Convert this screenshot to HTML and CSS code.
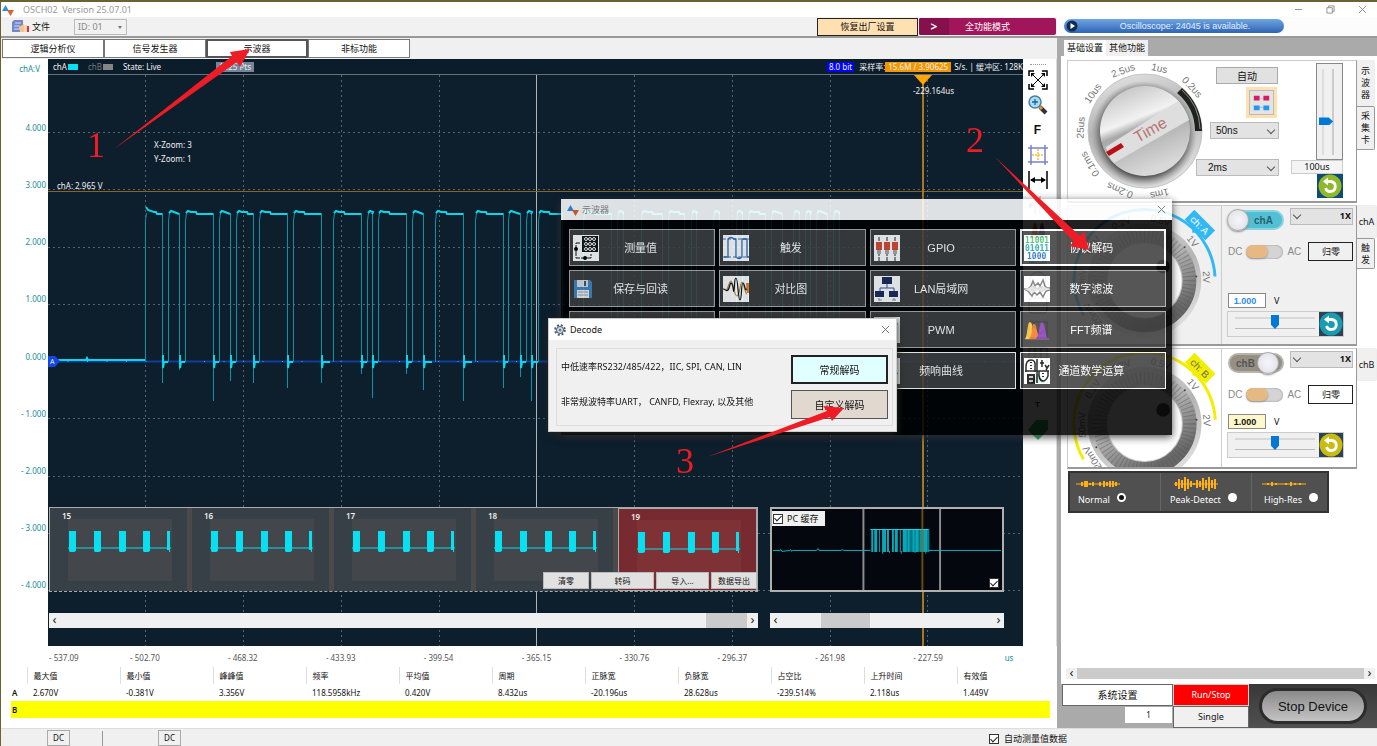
FILE: index.html
```html
<!DOCTYPE html>
<html lang="zh-CN">
<head>
  <meta charset="utf-8">
  <title>OSCH02 Version 25.07.01</title>
  <link rel="stylesheet" href="styles.css">
</head>
<body>
  <!-- shared shapes -->
  <svg class="defs" width="0" height="0">
    <defs>
      <linearGradient id="metal" x1="0" y1="0" x2="0.3" y2="1">
        <stop offset="0" stop-color="#e8e8e8"/><stop offset="0.5" stop-color="#b4b4b4"/><stop offset="1" stop-color="#dcdcdc"/>
      </linearGradient>
      <linearGradient id="face" x1="0" y1="0" x2="0.4" y2="1">
        <stop offset="0" stop-color="#b8b8b8"/><stop offset="0.45" stop-color="#f2f2f2"/><stop offset="0.55" stop-color="#a8a8a8"/><stop offset="1" stop-color="#d8d8d8"/>
      </linearGradient>
      <radialGradient id="shade">
        <stop offset="0.75" stop-color="#333"/><stop offset="0.84" stop-color="#777"/><stop offset="1" stop-color="#999" stop-opacity="0"/>
      </radialGradient>
      <linearGradient id="ring" x1="0" y1="0" x2="0.6" y2="1">
        <stop offset="0" stop-color="#dedede"/><stop offset="0.5" stop-color="#b5b5b5"/><stop offset="1" stop-color="#666"/>
      </linearGradient>
      <symbol id="logo" viewBox="0 0 12 12">
        <path d="M0 7 L3.500 1 L7 7Z" fill="#2f8fe0"/><path d="M5 6H12L8.500 12Z" fill="#e0602a"/>
      </symbol>
      <symbol id="reload" viewBox="0 0 24 24">
        <circle cx="12" cy="12" r="11.500"/>
        <path d="M8 7.500 H13 A5 5 0 1 1 7.500 14" fill="none" stroke="#fff" stroke-width="2.800"/>
        <path d="M10 3.500V11.500L5 7.500Z" fill="#fff"/>
      </symbol>
      <symbol id="burst" viewBox="0 0 142 84">
        <path d="M19 41H122" stroke="#08dff0"/>
        <path d="M20 24h7v20l-2 1h-4l-1-1zM45 24h7v20l-2 1h-4l-1-1zM70 24h7v20l-2 1h-4l-1-1zM94 24h7v20l-2 1h-4l-1-1zM118 24h3v21h-1v-2h-2z" fill="#08dff0"/>
      </symbol>
      <symbol id="knob" viewBox="0 0 154 141">
        <g class="knob-text">
          <text transform="rotate(87 77 76)" x="77" y="16">2V</text>
          <text transform="rotate(51 77 76)" x="77" y="16">1V</text>
          <text transform="rotate(15 77 76)" x="77" y="16">0.5V</text>
          <text transform="rotate(-22 77 76)" x="77" y="16">0.2V</text>
          <text transform="rotate(-56 77 76)" x="77" y="16">0.1V</text>
          <text transform="rotate(-91 77 76)" x="77" y="16">50mV</text>
          <text transform="rotate(-123 77 76)" x="77" y="16">20mV</text>
        </g>
        <circle cx="77" cy="76" r="58" fill="url(#metal)"/>
        <circle cx="77" cy="76" r="46" fill="none" stroke="url(#ring)" stroke-width="14"/>
        <circle cx="77" cy="76" r="46" fill="none" stroke="#555" stroke-width="13" stroke-dasharray="1 3" opacity=".4"/>
        <circle cx="77" cy="76" r="38" fill="#fff"/>
        <circle cx="96" cy="62" r="7" fill="#555"/>
        <g fill="#444"><circle cx="130" cy="72" r="1"/><circle cx="118" cy="42" r="1"/><circle cx="28" cy="100" r="1"/></g>
      </symbol>
    </defs>
  </svg>

  <header class="titlebar">
    <svg class="logo"><use href="#logo"/></svg>
    <span>OSCH02&nbsp; Version 25.07.01</span>
    <div class="window-btns">
      <button aria-label="minimize"><svg viewBox="0 0 10 10"><path d="M1 5H9"/></svg></button>
      <button aria-label="restore"><svg viewBox="0 0 10 10"><path d="M1 3H7V9H1ZM3 3V1H9V7H7"/></svg></button>
      <button aria-label="close"><svg viewBox="0 0 10 10"><path d="M1 1L9 9M9 1L1 9"/></svg></button>
    </div>
  </header>

  <div class="toolbar">
    <div class="toolbar-left">
      <button class="file-btn">
        <svg viewBox="0 0 18 13"><path d="M2 0H11V12H0V2Z" fill="#7388c8"/><path d="M3 3H9M2 6H8M2 9H8" stroke="#d5dcf5"/><path d="M7 7L12 4V12H8Z" fill="#f6c38c"/><path d="M12 5h3v7h-3z" fill="#f8d9a8"/><path d="M15 6h2v6h-2z" fill="#e8284c"/></svg>
        文件
      </button>
      <div class="select id-select"><select aria-label="ID"><option>ID: 01</option></select></div>
      <button class="restore-btn">恢复出厂设置</button>
      <button class="mode-btn"><b>&gt;</b><span>全功能模式</span></button>
    </div>
    <div class="device-pill">
      <svg viewBox="0 0 12 12"><circle cx="6" cy="6" r="5.500" fill="#122b55"/><path d="M4.500 3L9 6L4.500 9Z" fill="#fff"/></svg>
      <span>Oscilloscope: 24045 is available.</span>
    </div>
  </div>

  <main>
    <section class="left">
      <nav class="tabs">
        <button>逻辑分析仪</button>
        <button>信号发生器</button>
        <button class="active">示波器</button>
        <button>非标功能</button>
      </nav>

      <div class="scope">
        <div class="y-axis">
          <span class="unit">chA:V</span>
          <div class="ticks">
            <span>4.000</span><span>3.000</span><span>2.000</span><span>1.000</span><span>0.000</span><span>- 1.000</span><span>- 2.000</span><span>- 3.000</span><span>- 4.000</span>
          </div>
        </div>

        <div class="plot">
          <svg class="graph" viewBox="0 0 975 587" preserveAspectRatio="none">
            <path class="grid-v" d="M97.500 16V587M195.500 16V587M293.500 16V587M391.500 16V587M586.500 16V587M684.500 16V587M782.500 16V587M879.500 16V587"/>
            <path class="grid-v" d="M0 73.500H975M0 130.500H975M0 188.500H975M0 245.500H975M0 359.500H975M0 417.500H975M0 474.500H975M0 531.500H975"/>
            <path d="M488.500 16V587" stroke="#aeb4ba"/>
            <path d="M0 302.500H975" stroke="#0c3f9c" stroke-width="2"/>
            <path d="M0 302.500H975" stroke="#7f95c8" stroke-dasharray="1 18.500"/>
            <path id="edges"/>
            <path id="tops"/>
            <path d="M0 132.500H975" stroke="#8a6424"/>
            <path d="M875 16V587" stroke="#a8781a" stroke-width="2"/>
            <path d="M866 16H884L875 26Z" fill="#ffa500"/>
            <path d="M0 297H7L12 302L7 308H0Z" fill="#1247e0"/>
          </svg>

          <div class="plot-head">
            <span>chA</span><i class="swatch a"></i>
            <span class="dim">chB</span><i class="swatch b"></i>
            <span class="state">State: Live</span>
            <span class="pts">1325 Pts</span>
            <span class="bits">8.0 bit</span>
            <span>采样率:</span>
            <span class="rate">15.6M / 3.90625</span>
            <span class="buffer">S/s. | 缓冲区: 128K</span>
          </div>
          <div class="zoom-info"><p>X-Zoom: 3</p><p>Y-Zoom: 1</p></div>
          <span class="level">chA: 2.965 V</span>
          <span class="cursor-time">-229.164us</span>
          <span class="zero-mark">A</span>

          <div class="history">
            <div class="frames">
              <div class="frame"><b>15</b><svg><use href="#burst"/></svg></div>
              <div class="frame"><b>16</b><svg><use href="#burst"/></svg></div>
              <div class="frame"><b>17</b><svg><use href="#burst"/></svg></div>
              <div class="frame"><b>18</b><svg><use href="#burst"/></svg></div>
              <div class="frame current"><b>19</b><svg><use href="#burst"/></svg></div>
              <div class="frame-btns">
                <button>清零</button><button>转码</button><button>导入...</button><button>数据导出</button>
              </div>
            </div>
            <div class="cache">
              <svg viewBox="0 0 234 85" preserveAspectRatio="none">
                <path d="M93 0V85M171 0V85" stroke="#8c8c8c" stroke-width="2"/>
                <path d="M1 43.500H8l1-1 1 2 8-1 1-1 1 2 1-1H45l2-2 1 2H70l2-1 1 1H100M159 43.500H233" stroke="#08b8c8" fill="none"/>
                <path d="M101 33H160" stroke="#08a8b8" stroke-width="24" stroke-dasharray="2 1 3 2 1 2 4 1 2 3"/>
                <path d="M136 33H159" stroke="#08a8b8" stroke-width="24" opacity=".7"/>
                <path d="M100 21.500H159" stroke="#08dff0"/>
                <path d="M112.500 44V47M119.500 44V46M131.500 44V47M145.500 44V46M156.500 44V47" stroke="#08a8b8"/>
                <path d="M153 0V85" stroke="#a8781a" stroke-width="2" opacity=".6"/>
              </svg>
              <label class="cache-label"><input type="checkbox" checked> PC 缓存</label>
              <input class="cache-check" type="checkbox" checked aria-label="显示缓存">
            </div>
            <div class="scrollbar"><i>‹</i><span class="track"><span style="margin-left:94%;width:6%"></span></span><i>›</i></div>
            <div class="scrollbar"><i>‹</i><span class="track"><span style="margin-left:19%;width:23%"></span></span><i>›</i></div>
          </div>
        </div>

        <div class="tools">
          <hr>
          <button aria-label="fit"><svg viewBox="0 0 20 20"><path d="M1 6V1H6M14 1H19V6M19 14V19H14M6 19H1V14" fill="none" stroke="#000" stroke-width="1.500"/><path d="M3 3L17 17M17 3L3 17" stroke="#000"/><path d="M3 3h4L3 7zM17 3v4l-4-4zM3 17v-4l4 4zM17 17h-4l4-4z"/></svg></button>
          <button aria-label="zoom"><svg viewBox="0 0 20 20"><path d="M12 12L18 18" stroke="#333" stroke-width="4"/><path d="M11 11L14 14" stroke="#e8902a" stroke-width="3"/><circle cx="7" cy="7" r="6" fill="#a8dcf8" stroke="#4c7f9c" stroke-width="1.500"/><path d="M4 7H10M7 4V10" stroke="#24608a" stroke-width="1.300"/></svg></button>
          <button class="letter">F</button>
          <button aria-label="grid"><svg viewBox="0 0 20 20"><path d="M0 3H20M0 17H20M3 0V20M17 0V20" stroke="#7883c8" stroke-width="1.500"/><path d="M4 10H16M10 4V16" stroke="#f0c040" stroke-width="1.500" stroke-dasharray="2 1"/></svg></button>
          <button aria-label="width"><svg viewBox="0 0 20 20"><path d="M1 1V19M19 1V19M3 10H17" stroke="#000" stroke-width="1.500"/><path d="M2 10l5-3v6zM18 10l-5-3v6z"/></svg></button>
          <button aria-label="pause"><svg viewBox="0 0 20 20"><path d="M7 1V19M12 1V19" stroke="#999"/><path d="M1 7L6 10L1 13Z" fill="#999"/></svg></button>
          <button aria-label="histogram"><svg viewBox="0 0 20 20"><path d="M1 18C5 18 4 3 7 3S9 18 12 18Z" fill="#c85a28"/><path d="M9 18C12 18 11 3 14 3S16 18 19 18Z" fill="#7a3fa0"/></svg></button>
          <button aria-label="save"><svg viewBox="0 0 20 20"><path d="M2 2H18V18H2ZM5 2V8H15V2M5 18V11H15V18" fill="none" stroke="#2c6f94"/></svg></button>
          <button aria-label="record"><svg viewBox="0 0 20 20"><circle cx="10" cy="10" r="8" fill="none" stroke="#888"/></svg></button>
          <button aria-label="frame"><svg viewBox="0 0 20 20"><rect x="1" y="3" width="18" height="15" rx="3" fill="none" stroke="#777"/><path d="M2 10H18" stroke="#c8a020"/></svg></button>
          <button aria-label="wave"><svg viewBox="0 0 20 20"><path d="M1 2H19V18H1ZM3 10Q6 3 9 10T16 10" fill="none" stroke="#777"/></svg></button>
          <button aria-label="table"><svg viewBox="0 0 20 20"><path d="M1 3H19V18H1ZM1 8H19M1 13H19M7 3V18M13 3V18" fill="none" stroke="#777"/></svg></button>
          <button aria-label="clean"><svg viewBox="0 0 20 20"><path d="M10 2L17 13H3Z" fill="#1e9c7c"/></svg></button>
          <button class="letter small">T</button>
          <button aria-label="tag"><svg viewBox="0 0 20 20"><path d="M8 0H20V10L10 20L0 10Z" fill="#2fb56c"/></svg></button>
        </div>
      </div>

      <div class="x-axis">
        <span>- 537.09</span><span>- 502.70</span><span>- 468.32</span><span>- 433.93</span><span>- 399.54</span><span>- 365.15</span><span>- 330.76</span><span>- 296.37</span><span>- 261.98</span><span>- 227.59</span><span class="unit">us</span>
      </div>

      <table class="measure">
        <thead>
          <tr><th></th><th>最大值</th><th>最小值</th><th>峰峰值</th><th>频率</th><th>平均值</th><th>周期</th><th>正脉宽</th><th>负脉宽</th><th>占空比</th><th>上升时间</th><th>有效值</th></tr>
        </thead>
        <tbody>
          <tr><th>A</th><td>2.670V</td><td>-0.381V</td><td>3.356V</td><td>118.5958kHz</td><td>0.420V</td><td>8.432us</td><td>-20.196us</td><td>28.628us</td><td>-239.514%</td><td>2.118us</td><td>1.449V</td></tr>
          <tr class="row-b"><th>B</th><td colspan="11"></td></tr>
        </tbody>
      </table>
    </section>

    <aside class="right">
      <nav class="side-head"><button class="active">基础设置</button><button>其他功能</button></nav>

      <div class="panels">
        <div class="group">
          <div class="panel time">
            <svg class="time-knob" viewBox="0 0 136 141">
              <g class="knob-text">
                <text transform="rotate(13 77 70)" x="77" y="9">1us</text>
                <text transform="rotate(47 77 70)" x="77" y="9">0.2us</text>
                <text transform="rotate(-20 77 70)" x="77" y="9">2.5us</text>
                <text transform="rotate(-54 77 70)" x="77" y="9">10us</text>
                <text transform="rotate(-87 77 70)" x="77" y="9">25us</text>
                <text transform="rotate(-121 77 70)" x="77" y="9">0.1ms</text>
                <text transform="rotate(-157 77 70)" x="77" y="9">0.2ms</text>
                <text transform="rotate(-193 77 70)" x="77" y="9">1ms</text>
              </g>
              <circle cx="77" cy="70" r="57" fill="url(#metal)" stroke="#c4c4c4"/>
              <circle cx="76" cy="73" r="53" fill="url(#shade)"/>
              <path d="M109 32A50 50 0 0 1 127 70H134A57 57 0 0 0 114 27Z" fill="#20221f"/>
              <path d="M114 29A54 54 0 0 1 132 68" fill="none" stroke="#8f8f8a"/>
              <circle cx="77" cy="70" r="45" fill="url(#face)"/>
              <path d="M38 86L110 40Q118 48 121 59L46 102Q40 96 38 86Z" fill="#dedede"/>
              <path d="M38 91L53 82L56 86L41 95Z" fill="#bb0f14"/>
              <text class="time-text" transform="rotate(-29 83 70)" x="83" y="74">Time</text>
            </svg>
            <div class="time-controls">
              <button class="auto-btn">自动</button>
              <button class="link-btn" aria-label="link"><svg viewBox="0 0 24 24"><path d="M7 8H17" stroke="#d8bcc8"/><path d="M7 17H17" stroke="#9cc"/><path d="M4 5h6v5h-6zM14 5h6v5h-6z" fill="#d81b60"/><path d="M4 15h6v5h-6zM14 15h6v5h-6z" fill="#2196f3"/></svg></button>
              <div class="select step"><select aria-label="最小时基"><option>50ns</option></select></div>
              <div class="select base"><select aria-label="时基"><option>2ms</option></select></div>
            </div>
            <div class="time-slider">
              <div class="v-slider"><input type="range" aria-label="时间" value="38"></div>
              <input type="text" class="time-value" aria-label="时间值" value="100us">
              <button class="reload green" aria-label="重置"><svg><use href="#reload"/></svg></button>
            </div>
          </div>
          <div class="side-tabs"><button class="active">示波器</button><button>采集卡</button></div>
        </div>

        <div class="group">
          <div class="panel channel a">
            <svg class="ch-knob" viewBox="0 0 154 141">
              <use href="#knob"/>
              <path class="arc" d="M15 112A72 72 0 1 1 149 72"/>
              <g transform="rotate(45 77 76)"><path class="tag" d="M62 -11H92V3H81L77 7L73 3H62Z"/><text class="tag-text" x="77" y="0">ch: A</text></g>
            </svg>
            <div class="ch-controls">
              <div class="row">
                <button class="toggle on"><span></span>chA</button>
                <div class="select probe"><select aria-label="chA 倍率"><option>1X</option></select></div>
              </div>
              <div class="row coupling">
                <span>DC</span><label class="switch"><input type="checkbox" aria-label="chA 耦合"></label><span>AC</span>
                <button class="zero">归零</button>
              </div>
              <div class="row volts"><input type="text" aria-label="chA 电平" value="1.000"><span>V</span></div>
              <div class="h-slider"><input type="range" aria-label="chA 偏移"><button class="reload" aria-label="重置 chA"><svg><use href="#reload"/></svg></button></div>
            </div>
          </div>
          <div class="side-tabs"><button class="active ch">chA</button><button class="trig">触发</button></div>
        </div>

        <div class="group">
          <div class="panel channel b">
            <svg class="ch-knob" viewBox="0 0 154 120">
              <use href="#knob" width="154" height="141"/>
              <path class="arc" d="M15 112A72 72 0 1 1 149 72"/>
              <g transform="rotate(45 77 76)"><path class="tag" d="M62 -11H92V3H81L77 7L73 3H62Z"/><text class="tag-text" x="77" y="0">ch: B</text></g>
            </svg>
            <div class="ch-controls">
              <div class="row">
                <button class="toggle">chB<span></span></button>
                <div class="select probe"><select aria-label="chB 倍率"><option>1X</option></select></div>
              </div>
              <div class="row coupling">
                <span>DC</span><label class="switch"><input type="checkbox" aria-label="chB 耦合"></label><span>AC</span>
                <button class="zero">归零</button>
              </div>
              <div class="row volts"><input type="text" aria-label="chB 电平" value="1.000"><span>V</span></div>
              <div class="h-slider"><input type="range" aria-label="chB 偏移"><button class="reload" aria-label="重置 chB"><svg><use href="#reload"/></svg></button></div>
            </div>
          </div>
          <div class="side-tabs"><button class="active ch">chB</button></div>
        </div>

        <div class="acquire">
          <label><svg viewBox="0 0 44 14"><path d="M0 7H44" stroke="#ffb014"/><path d="M6 5v4M9 4v6M11 4v6M14 6v2M17 5v4M24 5v4M28 4v6M31 5v4M34 4v6M37 4v6M40 5v4" stroke="#ffb014" stroke-width="2"/></svg><span>Normal <input type="radio" name="acq" checked></span></label>
          <label><svg viewBox="0 0 44 14"><path d="M0 7H44" stroke="#ffb014"/><path d="M2 5v4M5 2v10M8 3v8M11 0v14M14 2v10M17 4v6M20 6v2M23 3v8M26 4v6M29 1v12M32 3v8M35 0v14M38 3v8M41 2v10" stroke="#ffb014" stroke-width="2"/></svg><span>Peak-Detect <input type="radio" name="acq"></span></label>
          <label><svg viewBox="0 0 44 14"><path d="M0 7H44" stroke="#ffb014"/><path d="M6 6v2M10 5v4M14 6v2M24 6v2M29 5v4M33 6v2M38 6v2" stroke="#ffb014" stroke-width="2"/></svg><span>High-Res <input type="radio" name="acq"></span></label>
        </div>
      </div>

      <div class="scrollbar wide"><i>‹</i><span class="track"><span style="width:100%"></span></span><i>›</i></div>
      <div class="run">
        <button class="sys">系统设置</button>
        <button class="run-stop">Run/Stop</button>
        <div class="stop"><button>Stop Device</button></div>
        <input type="text" class="count" aria-label="次数" value="1">
        <button class="single">Single</button>
      </div>
    </aside>
  </main>

  <footer class="statusbar">
    <span class="dc">DC</span><i></i><span class="dc">DC</span>
    <label><input type="checkbox" checked> 自动测量值数据</label>
  </footer>

  <!-- function window -->
  <div class="func-window">
    <div class="func-title"><svg class="logo"><use href="#logo"/></svg><span>示波器</span><button aria-label="close"><svg viewBox="0 0 10 10"><path d="M1 1L9 9M9 1L1 9"/></svg></button></div>
    <div class="func-grid">
      <button><svg viewBox="0 0 26 26"><path d="M0 0H26V26H0Z" fill="#fff"/><path d="M9 1H25V17H9Z" fill="#111"/><g fill="none" stroke="#fff"><circle cx="13" cy="4" r="1.500"/><circle cx="17" cy="4" r="1.500"/><circle cx="21" cy="4" r="1.500"/><circle cx="13" cy="9" r="1.500"/><circle cx="17" cy="9" r="1.500"/><circle cx="21" cy="9" r="1.500"/><circle cx="13" cy="14" r="1.500"/><circle cx="17" cy="14" r="1.500"/><circle cx="21" cy="14" r="1.500"/></g><path d="M7 8H3V23H18V19" fill="none" stroke="#111" stroke-dasharray="5 1"/><circle cx="3" cy="14" r="2"/><circle cx="12" cy="23" r="2"/></svg><span>测量值</span></button>
      <button><svg viewBox="0 0 26 26"><path d="M0 0H26V26H0Z" fill="#fff"/><path d="M0 4H26M0 22H26" stroke="#3c70b8" stroke-dasharray="3 2"/><path d="M1 22H5V4Q8 1 11 4H13V22Q16 25 19 22V4H24V22H26" fill="none" stroke="#2e68b4" stroke-width="1.300"/></svg><span>触发</span></button>
      <button><svg viewBox="0 0 26 26"><path d="M0 0H26V26H0Z" fill="#fff"/><path d="M5 2V26M13 2V26M21 2V26" stroke="#222" stroke-dasharray="4 1"/><path d="M2 7h6v8h-6zM10 7h6v8h-6zM18 7h6v8h-6z" fill="#d84a34"/><path d="M3 15h4v4h-4zM11 15h4v4h-4zM19 15h4v4h-4z" fill="#aaa"/></svg><span>GPIO</span></button>
      <button class="hot"><svg viewBox="0 0 26 26"><path d="M0 0H26V26H0Z" fill="#fff"/><g font-family="DejaVu Sans Mono" font-weight="bold" font-size="8"><text x="1" y="8" fill="#3cc46c">11001</text><text x="1" y="16" fill="#25a8a8">01011</text><text x="3" y="24" fill="#2b78d8">1000</text></g></svg><span>协议解码</span></button>
      <button><svg class="low" viewBox="0 0 26 26"><path d="M1 4H17L19 6V22H1Z" fill="#3f86c4"/><path d="M4 4H15V11H4Z" fill="#d8dde0"/><path d="M11 5h2v5h-2z" fill="#456"/><path d="M4 14H16V22H4Z" fill="#eee"/><path d="M5 16H15M5 19H15" stroke="#999"/></svg><span>保存与回读</span></button>
      <button><svg viewBox="0 0 26 26"><path d="M0 0H26V26H0Z" fill="#fff"/><g fill="none" stroke-width="1.200"><path d="M3 14C5 14 6 5 8 5S11 20 14 20S17 6 19 6S22 18 24 18" stroke="#b89038"/><path d="M0 13C3 13 3 16 5 14S7 4 9 8S10 18 11 14S11 2 13 2S15 24 17 24S18 7 20 7S22 20 25 10" stroke="#111"/></g><path d="M23 7h3v10h-2z" fill="#e87a20"/></svg><span>对比图</span></button>
      <button><svg viewBox="0 0 26 26"><path d="M0 0H26V26H0Z" fill="#fff"/><path d="M13 7V12M6 17V12H20V17" fill="none" stroke="#3355b0"/><path d="M8 1H18V8H8ZM1 15H10V21H1ZM15 15H24V21H15Z" fill="#1d2b58"/><path d="M4 24h4M18 24h4M5 22v2M20 22v2" stroke="#88a"/></svg><span>LAN局域网</span></button>
      <button><svg viewBox="0 0 26 26"><path d="M0 0H26V26H0Z" fill="#fff"/><path d="M0 13H4L7 10L9 5L11 10L14 7L16 10L19 4L21 10L23 12H26M0 13L4 15L8 20L10 16L13 19L16 16L19 21L22 15L26 14" fill="none" stroke="#777" stroke-width="1.500"/><path d="M0 13L5 12L9 9L13 12L18 10L26 13L18 16L13 14L9 17Z" fill="#e0e0e0"/></svg><span>数字滤波</span></button>
      <button></button>
      <button></button>
      <button><svg viewBox="0 0 26 26"><path d="M0 0H26V26H0Z" fill="#fff"/><path d="M2 19V7H9V19H17V7H24" fill="none" stroke="#3970b8"/></svg><span>PWM</span></button>
      <button><svg viewBox="0 0 26 26"><path d="M1 22H25" stroke="#777"/><path d="M1 22C4 19 3 5 6 5S9 18 12 22Z" fill="#f8c838"/><path d="M5 22C9 18 7 7 10 7S13 18 16 22Z" fill="#f07828"/><path d="M12 22C16 17 15 5 18 5S21 18 24 22Z" fill="#8a3cb4"/></svg><span>FFT频谱</span></button>
      <button class="bright"></button>
      <button class="bright"></button>
      <button class="bright"><svg viewBox="0 0 26 26"><path d="M0 0H26V26H0Z" fill="#fff"/><path d="M2 20Q12 2 24 16" fill="none" stroke="#3970b8"/></svg><span>频响曲线</span></button>
      <button class="bright"><svg viewBox="0 0 26 26"><path d="M0 0H26V26H0Z" fill="#fff"/><path d="M2 14V9Q2 2 7 2T11 9V14M1 13H25M13 1V25M15 13V18Q16 23 19 23T24 18V13M16 5H20M18 2V9M21 7L23 10M25 7L22 12" fill="none" stroke="#111" stroke-width="1.500"/><path d="M3 16h8v10h-8z" fill="#111"/><path d="M5 19h4M5 23h4" stroke="#fff" stroke-width="1.500"/><path d="M7 4v7M19 15v6" stroke="#111" stroke-dasharray="1 2" stroke-width="2"/></svg><span>通道数学运算</span></button>
    </div>
  </div>

  <!-- decode dialog -->
  <div class="decode" role="dialog" aria-label="Decode">
    <div class="decode-title">
      <svg viewBox="0 0 12 12"><circle cx="6" cy="6" r="4.800" fill="none" stroke="#4a5a66" stroke-width="2" stroke-dasharray="2 1.800"/><circle cx="6" cy="6" r="3.500" fill="#dbe4ea" stroke="#4a5a66"/><circle cx="6" cy="6" r="1.500" fill="#68808c"/></svg>
      <span>Decode</span>
      <button aria-label="close"><svg viewBox="0 0 10 10"><path d="M1 1L9 9M9 1L1 9"/></svg></button>
    </div>
    <div class="decode-body">
      <div class="decode-row"><span>中低速率RS232/485/422，IIC, SPI, CAN, LIN</span><button class="normal">常规解码</button></div>
      <div class="decode-row"><span>非常规波特率UART， CANFD, Flexray, 以及其他</span><button class="custom">自定义解码</button></div>
    </div>
  </div>

  <!-- step arrows -->
  <svg class="steps" width="1377" height="746">
    <path d="M114 149L232 56L230 52L250 49L240 67L237 62Z"/>
    <path d="M995 157L1080 236L1084 231L1089 250L1069 246L1074 242Z"/>
    <path d="M707 457L827 411L823 406L844 408L832 421L830 417Z"/>
    <text x="87" y="157">1</text>
    <text x="966" y="152">2</text>
    <text x="676" y="473">3</text>
  </svg>

  <script>
    // [rise, fall, depth of the undershoot]
    const pulses = [
      [97, 114, 324], [120, 131, 311], [137, 165, 342], [171, 182, 322], [188, 205, 324],
      [211, 239, 329], [245, 273, 324], [285, 313, 315], [319, 324, 339], [330, 358, 315],
      [364, 375, 331], [387, 415, 342], [427, 455, 329], [460, 472, 318], [478, 483, 342],
      [490, 514, 320], [535, 563, 330], [569, 575, 318], [593, 614, 324], [620, 636, 330],
      [643, 648, 322], [665, 671, 318], [688, 694, 324], [700, 717, 330], [723, 734, 320],
      [745, 751, 322], [757, 762, 318], [768, 779, 325], [785, 791, 320]
    ];
    const low = 303;
    const high = 154;
    let edges = '';
    let tops = 'M0 301H38l1-2 1 2H97';

    pulses.forEach(([rise, fall, depth], i) => {
      const x = rise + 0.5;
      edges += `M${x} ${low}V${high + 8}L${x + 1} ${high}M${fall + 0.5} ${high}V${depth}`;
      tops += i ? `M${rise + 1} ${high}l2 -2l3 1` : `M${rise + 1} ${high - 6}l2 3l6 2`;
      if (fall - rise > 12) {
        tops += `L${rise + 11} ${high - 1}l1 2`;
      }
      tops += `L${fall} ${high + 1}`;
      const next = pulses[i + 1];
      if (next) tops += `M${fall + 1} 296v13l1-6H${Math.min(next[0], fall + 9)}`;
    });

    document.getElementById('edges').setAttribute('d', edges);
    document.getElementById('tops').setAttribute('d', tops);
  </script>
</body>
</html>
```
FILE: styles.css
```css
* { margin: 0; padding: 0; box-sizing: border-box; }
body {
  font-family: "Noto Sans", "Noto Sans CJK SC", sans-serif;
  font-size: 9px;
  line-height: 14px;
  color: #111;
  background: #f0f0f0;
  min-height: 100vh;
  display: flex;
  flex-direction: column;
  border-top: 2px solid #6b6233;
  border-left: 1px solid #6b6233;
  position: relative;
  overflow: hidden;
}
button, input, select {
  font: inherit;
  color: inherit;
  border: 0;
  background: none;
  border-radius: 0;
}
button { white-space: nowrap; }
svg { display: block; }
.defs { position: absolute; }
.logo { width: 12px; height: 12px; }

.titlebar {
  display: flex;
  align-items: center;
  gap: 9px;
  height: 15px;
  padding-left: 1px;
  background: #fff;
  color: #999;
}
.window-btns {
  display: flex;
  gap: 23px;
  margin-left: auto;
  margin-right: 10px;
}
.window-btns svg { width: 9px; height: 9px; fill: none; stroke: #888; }

.toolbar {
  display: flex;
  height: 19px;
  background: #fcfcfc;
}
.toolbar-left {
  display: flex;
  flex: 1;
  align-items: center;
  background: #f1f1f1;
}
.file-btn {
  display: flex;
  align-items: center;
  gap: 2px;
  margin-left: 11px;
  font-size: 9px;
}
.file-btn svg { width: 18px; height: 13px; }
.select { position: relative; }
.select select {
  appearance: none;
  width: 100%;
  height: 100%;
  padding: 0 5px;
  background: #e3e3e3;
  border: 1px solid #bbb;
}
.select::after {
  content: "";
  position: absolute;
  right: 5px;
  top: 50%;
  width: 5px;
  height: 5px;
  margin-top: -4px;
  border: solid #555;
  border-width: 0 1px 1px 0;
  transform: rotate(45deg);
  pointer-events: none;
}
.id-select {
  width: 53px;
  height: 16px;
  margin-left: 24px;
  color: #888;
}
.id-select select { background: #f1f1f1; padding: 0 3px; }
.id-select::after {
  border: 2px solid transparent;
  border-top: 3px solid #777;
  width: 0;
  height: 0;
  margin-top: -1px;
  transform: none;
}
.restore-btn {
  width: 101px;
  height: 18px;
  margin-left: auto;
  background: #ffe0b0;
  border: 1px solid #222;
}
.mode-btn {
  display: flex;
  width: 137px;
  height: 17px;
  margin: 0 1px;
  align-items: center;
  color: #fff;
  background: #a1155a;
  border-radius: 2px;
  overflow: hidden;
}
.mode-btn b {
  width: 30px;
  line-height: 17px;
  font-size: 12px;
  background: #86104b;
}
.mode-btn span { flex: 1; padding-right: 30px; }
.device-pill {
  display: flex;
  align-items: center;
  width: 220px;
  height: 14px;
  margin: 2px 93px 0 7px;
  padding-left: 2px;
  border-radius: 7px;
  background: linear-gradient(#6fa5e0, #2d64b4);
  color: #e4efff;
  font-family: "Liberation Sans", sans-serif;
}
.device-pill svg { width: 12px; height: 12px; }
.device-pill span { flex: 1; padding-left: 8px; text-align: center; }

main {
  flex: 1;
  display: flex;
  border-top: 2px solid #999;
}
.left {
  flex: 1;
  display: flex;
  flex-direction: column;
  background: #fff;
  border-right: 4px solid #aaa;
  min-width: 0;
}
.tabs {
  display: flex;
  height: 21px;
  padding: 1px 1px;
  background: #f0f0f0;
}
.tabs button {
  width: 102px;
  height: 19px;
  background: #fff;
  border: 1px solid #777;
}
.tabs .active { border: 2px solid #555; }

.scope { flex: 1; display: flex; }
.y-axis {
  display: flex;
  flex-direction: column;
  width: 47px;
  padding: 3px 2px 54px 0;
  text-align: right;
  color: #1b8c96;
  font-size: 8px;
}
.y-axis .unit { padding-right: 6px; }
.ticks {
  flex: 1;
  display: flex;
  flex-direction: column;
  justify-content: space-between;
  padding-top: 45px;
}
.plot {
  flex: 1;
  position: relative;
  background: #0d1e2d;
  color: #f0f0f0;
  font-size: 8px;
}
.graph {
  position: absolute;
  width: 100%;
  height: 100%;
}
.grid-v { stroke: #566471; stroke-dasharray: 2 3; fill: none; }
#edges { stroke: #0894a6; fill: none; }
#tops { stroke: #0ad6ea; stroke-width: 2; fill: none; }
.plot-head {
  position: relative;
  display: flex;
  align-items: center;
  height: 16px;
  padding-left: 5px;
  background: #0b1c2b;
  border-bottom: 1px solid #66717b;
}
.plot-head span { line-height: 10px; }
.swatch { width: 10px; height: 6px; margin-left: 1px; background: #08dff0; }
.swatch.b { background: #858585; }
.plot-head .dim { margin-left: 10px; color: #777; }
.plot-head .state { margin-left: 10px; }
.plot-head .pts { margin-left: 55px; padding: 0 3px; background: #75869a; }
.plot-head .bits { margin-left: auto; margin-right: 5px; padding: 0 2px; background: #00f; }
.plot-head .rate { padding: 0 3px; margin-right: 3px; background: #f09600; }
.zoom-info { position: absolute; left: 106px; top: 79px; }
.level { position: absolute; left: 9px; top: 120px; }
.cursor-time { position: absolute; right: 69px; top: 25px; }
.zero-mark {
  position: absolute;
  left: 2px;
  top: 296px;
  font-size: 7px;
}
.history {
  position: absolute;
  left: 1px;
  right: 19px;
  bottom: 18px;
  display: grid;
  grid-template-columns: minmax(0, 1fr) 234px;
  gap: 21px 12px;
}
.frames {
  position: relative;
  display: flex;
  height: 85px;
  border: 1px solid #aaa;
  border-bottom-style: dashed;
}
.frame {
  flex: 1;
  min-width: 0;
  position: relative;
  background: #374046;
  border-right: 5px solid #4a4a4a;
}
.frame::before {
  content: "";
  position: absolute;
  left: 18px;
  right: 15px;
  top: 11px;
  bottom: 10px;
  background: #43474b;
}
.frame b {
  position: absolute;
  left: 12px;
  top: 1px;
  font-weight: 600;
}
.frame svg { position: relative; width: 142px; height: 84px; margin-left: -1px; margin-top: -1px; }
.frame.current { background: #772b30; border: 1px solid #aaa; }
.frame.current::before { background: #7f3236; }
.frame-btns {
  position: absolute;
  right: 0;
  bottom: 2px;
  display: flex;
  gap: 2px;
  color: #111;
}
.frame-btns button {
  width: 46px;
  height: 17px;
  background: #e1e1e1;
  border: 1px solid #bbb;
}
.frame-btns button:nth-child(2) { width: 63px; }
.frame-btns button:nth-child(3) { width: 53px; }
.cache {
  position: relative;
  background: #04080e;
  border: 2px solid #b0b0b0;
  color: #111;
}
.cache > svg { width: 100%; height: 81px; }
.cache-label {
  position: absolute;
  left: 0;
  top: 2px;
  display: flex;
  align-items: center;
  gap: 4px;
  width: 53px;
  height: 15px;
  padding-left: 1px;
  background: #f0f0f0;
  font-size: 9px;
}
input[type="checkbox"] {
  appearance: none;
  flex: none;
  display: grid;
  place-items: center;
  width: 10px;
  height: 10px;
  background: #fff;
  border: 1px solid #333;
}
input[type="checkbox"]:checked::after {
  content: "";
  width: 3px;
  height: 6px;
  margin-top: -2px;
  border: solid #222;
  border-width: 0 1px 1px 0;
  transform: rotate(45deg);
}
.cache .cache-check { position: absolute; right: 3px; bottom: 2px; }
.scrollbar {
  display: flex;
  align-items: center;
  height: 15px;
  background: #f0f0f0;
  color: #222;
}
.scrollbar i {
  width: 11px;
  text-align: center;
  font-style: normal;
  font-size: 13px;
  line-height: 11px;
  padding-bottom: 3px;
}
.track { flex: 1; height: 100%; }
.track span { display: block; height: 100%; background: #cbcbcb; }

.tools {
  display: flex;
  flex-direction: column;
  align-items: center;
  gap: 5px;
  width: 34px;
  padding-top: 5px;
  padding-right: 4px;
  border-right: 1px solid #ddd;
}
.tools hr { width: 16px; border: 0; border-top: 1px dotted #999; }
.tools button { height: 20px; width: 20px; }
.tools svg { width: 20px; height: 20px; }
.tools .letter { font-family: "Liberation Sans", sans-serif; font-weight: bold; font-size: 12px; }
.tools .small { font-size: 8px; }

.x-axis {
  display: flex;
  height: 21px;
  margin: 0 34px 0 47px;
  font-size: 8px;
  line-height: 24px;
  color: #555;
}
.x-axis span { flex: 1; text-align: center; }
.x-axis span:first-child { flex: none; width: 48px; padding-left: 1px; text-align: left; }
.x-axis .unit { flex: none; width: 46px; padding-left: 18px; color: #1b8c96; }

.measure {
  width: calc(100% - 17px);
  margin: 0 7px 10px 10px;
  border-collapse: collapse;
  table-layout: fixed;
  font-size: 8px;
}
.measure th, .measure td {
  height: 17px;
  padding-left: 6px;
  text-align: left;
  font-weight: normal;
}
.measure th:first-child { width: 16px; padding-left: 1px; font-weight: 600; }
.measure thead th { border-left: 1px solid #ddd; }
.measure thead th:first-child { border: 0; }
.row-b { background: #ff0; }

.right {
  width: 316px;
  display: flex;
  flex-direction: column;
  background: #fff;
}
.side-head {
  display: flex;
  align-items: flex-end;
  height: 18px;
  padding-left: 3px;
  background: #aaa;
}
.side-head button { width: 42px; height: 16px; background: #f0f0f0; }
.side-head .active { background: #fff; }
.panels { flex: 1; padding: 4px 0 0 6px; }
.group { display: flex; margin-bottom: 2px; }
.panel {
  flex: 1;
  display: flex;
  border: 1px solid #999;
  border-top-color: #ccc;
  border-left-color: #ccc;
  border-bottom-width: 2px;
  overflow: hidden;
}
.side-tabs { width: 20px; }
.side-tabs button {
  width: 18px;
  height: 44px;
  padding: 0 4px;
  white-space: normal;
  line-height: 12px;
  background: #f0f0f0;
  border: 1px solid #999;
  border-left: 0;
  border-radius: 0 2px 2px 0;
}
.side-tabs .active { height: 46px; border-color: #eee; }
.side-tabs .ch { width: 20px; height: 33px; padding: 0; white-space: nowrap; }
.side-tabs .trig { height: 31px; }
.knob-text { font: 10px "Liberation Sans", sans-serif; fill: #777; text-anchor: middle; }

.time { height: 143px; padding-right: 13px; }
.time-knob { flex: none; width: 136px; height: 141px; margin-right: -8px; }
.time-text { font: 16px "Liberation Sans", sans-serif; fill: #b87474; text-anchor: middle; }
.time-controls {
  position: relative;
  display: flex;
  flex-direction: column;
  align-items: flex-end;
  width: 83px;
  padding-top: 6px;
}
.auto-btn {
  width: 62px;
  height: 17px;
  margin-right: 1px;
  font-size: 10px;
  background: #e1e1e1;
  border: 1px solid #aaa;
}
.link-btn {
  padding: 3px;
  margin: 3px 2px 4px;
  background: #ffe0b0;
}
.link-btn svg { width: 25px; height: 25px; background: #e3e3e3; border: 1px solid #bbb; }
.step { width: 69px; height: 17px; }
.base { width: 100%; height: 17px; margin-top: 20px; }
.base select { padding-left: 11px; }
.time-controls select { font-family: "Liberation Sans", sans-serif; font-size: 10px; }
.time-slider {
  display: flex;
  flex-direction: column;
  align-items: flex-end;
  flex: 1;
  padding-top: 2px;
}
.v-slider {
  width: 27px;
  height: 97px;
  background: #f0f0f0;
  border: 1px solid #888;
}
input[type="range"] { appearance: none; }
.v-slider input {
  writing-mode: vertical-lr;
  direction: rtl;
  width: 16px;
  height: 86px;
  margin: 5px 0 0 1px;
  background: linear-gradient(90deg, transparent 4px, #ddd 4px, #ddd 6px, transparent 6px, transparent 14px, #ccc 14px);
}
.v-slider input::-webkit-slider-thumb {
  appearance: none;
  width: 14px;
  height: 8px;
  background: #0078d7;
  clip-path: polygon(0 0, 70% 0, 100% 50%, 70% 100%, 0 100%);
}
.time-value {
  width: 52px;
  height: 14px;
  text-align: center;
  background: #f4f4f4;
  border: 1px solid #ccc;
}
.reload { background: #2b4257; }
.reload svg { width: 24px; height: 24px; fill: #1b9cae; }
.reload.green { background: #0f4a78; padding: 0 1px; }
.reload.green svg { fill: #8fb82a; }

.ch-knob { width: 154px; flex: none; border-right: 1px solid #ccc; }
.channel.a { height: 141px; background: #f0f0f0; }
.channel.b { height: 121px; }
.arc { fill: none; stroke: #32b8f5; stroke-width: 3; }
.tag { fill: #32b8f5; }
.b .arc { stroke: #f2ee00; }
.b .tag { fill: #f2ee00; }
.tag-text { font: 10px "Liberation Sans", sans-serif; fill: #fff; text-anchor: middle; }
.b .tag-text { fill: #666; }
.ch-controls {
  flex: 1;
  display: flex;
  flex-direction: column;
  padding: 1px 3px 0 6px;
}
.row { display: flex; align-items: center; }
.toggle {
  display: flex;
  align-items: center;
  width: 56px;
  height: 20px;
  margin: 3px 0;
  border-radius: 10px;
  background: #958f84;
  border: 2px solid #b8b4ad;
  color: #555;
  font: bold 10px "Liberation Sans", sans-serif;
  padding-left: 6px;
  gap: 2px;
}
.toggle.on {
  background: #52c0d4;
  border-color: #8bd3de;
  color: #27606a;
  padding-left: 0;
  gap: 5px;
}
.toggle span {
  width: 22px;
  height: 22px;
  border-radius: 50%;
  background: radial-gradient(#f6f6fa, #dcdce4);
  border: 1px solid #aaa;
  box-shadow: 0 1px 2px #888;
}
.toggle.on span { margin-left: -3px; }
.probe { flex: 1; height: 17px; margin-left: 6px; margin-bottom: 8px; }
.probe select { text-align: right; text-align-last: right; padding-right: 1px; font-weight: bold; }
.probe::after { right: auto; left: 4px; }
.coupling {
  gap: 4px;
  margin-top: 9px;
  color: #888;
  font-family: "Liberation Sans", sans-serif;
  font-size: 10px;
}
.switch { margin: 0; }
.switch input[type="checkbox"] {
  display: flex;
  width: 37px;
  height: 14px;
  border: 0;
  border-radius: 7px;
  background: #d4d4d4;
  box-shadow: inset 0 0 2px #888;
}
.switch input::before {
  content: "";
  width: 22px;
  height: 13px;
  border-radius: 7px;
  margin-right: 15px;
  background: #e6b983;
  box-shadow: 0 1px 2px #999;
}
.zero {
  width: 45px;
  height: 19px;
  margin-left: auto;
  color: #111;
  font-size: 9px;
  border: 1px solid #222;
}
.volts { gap: 8px; margin-top: 32px; }
.volts input {
  width: 38px;
  height: 15px;
  padding-right: 4px;
  text-align: center;
  font: bold 9px "Liberation Sans", sans-serif;
  color: #2e8cf0;
  background: #fff;
  border: 1px solid #888;
}
.h-slider {
  display: flex;
  justify-content: space-between;
  width: 117px;
  height: 26px;
  margin: 3px 0 0 -1px;
  background: #f0f0f0;
  border: 1px solid #ccc;
}
.h-slider input {
  width: 80px;
  height: 20px;
  margin-left: 7px;
  background: linear-gradient(transparent 5px, #d8d8d8 5px, #d8d8d8 7px, transparent 7px, transparent 16px, #bbb 16px, #bbb 17px, transparent 17px);
}
.h-slider input::-webkit-slider-thumb {
  appearance: none;
  width: 8px;
  height: 14px;
  background: #0078d7;
  clip-path: polygon(0 0, 100% 0, 100% 70%, 50% 100%, 0 70%);
}
.b .volts { margin-top: 10px; }
.b .volts input { background: #fff8cc; color: #111; }
.b .reload svg { fill: #c8bc10; }

.acquire {
  display: flex;
  width: 261px;
  height: 42px;
  margin-left: 1px;
  color: #fff;
  background: #505050;
  border: 2px solid #333;
  white-space: nowrap;
}
.acquire label {
  width: 91px;
  padding: 4px 0 0 6px;
  border-right: 1px solid #666;
}
.acquire label:nth-child(2) { padding-left: 13px; }
.acquire label:last-child { flex: 1; padding-left: 10px; border: 0; }
.acquire svg { width: 44px; height: 14px; }
.acquire label span { display: flex; gap: 7px; padding: 2px; }
.acquire label:nth-child(2) span { margin-left: -6px; }
.acquire input {
  appearance: none;
  flex: none;
  width: 9px;
  height: 9px;
  border-radius: 50%;
  background: #fff;
}
.acquire input:checked { background: #111; border: 2px solid #fff; }
.scrollbar.wide { height: 11px; margin: 0 2px 5px 5px; }
.run {
  display: grid;
  grid-template-columns: 111px 76px 1fr;
  grid-template-rows: 22px 22px;
  background: #aaa;
  padding-left: 1px;
}
.sys { background: #fff; border: 1px solid #666; font-size: 10px; }
.run-stop { background: #f00; color: #fff; border: 1px solid #ccc; }
.stop {
  grid-row: span 2;
  padding: 4px 10px;
  background: linear-gradient(#383838, #505050);
}
.stop button {
  width: 100%;
  height: 36px;
  border: 3px solid #2c2c2c;
  border-radius: 18px;
  background: linear-gradient(#8a8a8a, #c4c4c4);
  font: 13px "Liberation Sans", sans-serif;
}
.count {
  width: 47px;
  justify-self: end;
  margin: 1px 1px 5px 0;
  text-align: center;
  background: #fff;
  font-size: 8px;
}
.single { background: #f0f0f0; border: 1px solid #666; }

.statusbar {
  display: flex;
  align-items: flex-end;
  height: 18px;
  border-top: 1px solid #ddd;
}
.dc {
  width: 23px;
  height: 16px;
  margin-left: 46px;
  text-align: center;
  font-size: 8px;
  border: 1px solid #aaa;
}
.statusbar i { height: 15px; margin-left: 32px; border-left: 1px solid #999; }
.statusbar i + .dc { margin-left: 55px; }
.statusbar label { display: flex; align-items: center; gap: 5px; margin-left: auto; margin-right: 310px; }

/* windows that float over the page */
.func-window {
  position: absolute;
  left: 560px;
  top: 197px;
  width: 611px;
  height: 236px;
  background: #000;
  opacity: 0.87;
  box-shadow: 0 2px 8px #333;
}
.func-title {
  display: flex;
  align-items: center;
  gap: 3px;
  height: 21px;
  padding: 0 6px;
  background: #fff;
  color: #888;
}
.func-title button { margin-left: auto; }
.func-title button svg, .decode-title button svg { width: 9px; height: 9px; fill: none; stroke: #666; }
.func-grid {
  display: grid;
  grid-template-columns: repeat(4, 1fr);
  gap: 4px;
  padding: 9px 6px 0 8px;
}
.func-grid button {
  display: flex;
  align-items: center;
  height: 37px;
  padding: 0 4px 0 3px;
  background: #3c3c3c;
  border: 1px solid #aaa;
  color: #fff;
  font: 11px/14px "Liberation Sans", "Noto Sans CJK SC", sans-serif;
}
.func-grid svg { width: 26px; height: 26px; }
.func-grid span { flex: 1; padding-right: 28px; text-align: center; }
.func-grid .hot { padding: 0 3px 0 2px; border: 2px solid #fff; }
.func-grid .bright { border-color: #fff; }

.decode {
  position: absolute;
  left: 547px;
  top: 316px;
  width: 349px;
  height: 114px;
  background: #f0f0f0;
  border: 1px solid #ccc;
  box-shadow: 0 2px 8px #222;
}
.decode-title {
  display: flex;
  align-items: center;
  gap: 4px;
  height: 21px;
  padding: 0 6px 0 5px;
  background: #fff;
}
.decode-title svg { width: 12px; height: 12px; }
.decode-title button { margin-left: auto; }
.decode-body {
  display: flex;
  flex-direction: column;
  gap: 6px;
  margin: 8px 3px 0 7px;
  padding: 6px 4px;
  border: 1px solid #ddd;
}
.decode-row { display: flex; justify-content: space-between; white-space: pre; }
.decode-row span { padding-top: 5px; }
.decode-row button { width: 97px; height: 29px; font-size: 10px; }
.normal { background: #e0ffff; border: 2px solid #222; }
.custom { background: #e1d8cf; border: 1px solid #555; }

.steps {
  position: absolute;
  left: -1px;
  top: -2px;
  fill: #ee1c24;
  pointer-events: none;
}
.steps text { font: 36px "Liberation Serif", serif; }
```
